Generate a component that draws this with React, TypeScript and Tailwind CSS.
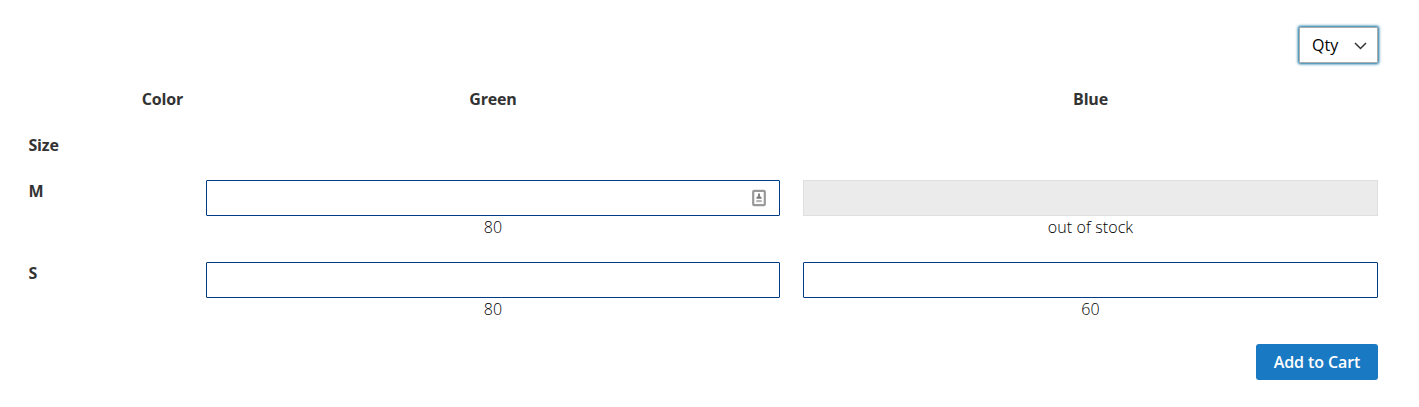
import React from "react";

const cells = [
  { size: "M", stock: [{ label: "80", icon: true, off: false }, { label: "out of stock", icon: false, off: true }] },
  { size: "S", stock: [{ label: "80", icon: false, off: false }, { label: "60", icon: false, off: false }] },
];

function ContactIcon() {
  return (
    <svg className="mr-3 shrink-0" width="16" height="18" viewBox="0 0 16 18" fill="none">
      <rect x="2.2" y="1.8" width="11.6" height="14.4" rx="1" stroke="#999" strokeWidth="2.2" />
      <rect x="7.1" y="4.5" width="1.8" height="2.8" fill="#777" />
      <path d="M5.3 9.8Q5.6 7 8 7T10.7 9.8Z" fill="#777" />
      <path d="M5.3 11H10.7V13.2H5.3Z" fill="#b5b5b5" />
    </svg>
  );
}

export default function App() {
  return (
    <main className="h-[407px] w-[1419px] bg-white pl-[28.5px] pr-[41px] pt-[27px] font-['Open_Sans',sans-serif] text-[16px] leading-[22px] text-[#333]">
      <div className="flex justify-end">
        <button className="flex h-9 w-[79px] items-center justify-between rounded-[1px] border border-[#adadad] bg-white pl-[12px] pr-[10px] text-black shadow-[0_0_3px_1px_#00699d]">
          Qty
          <svg className="mt-0.5" width="13" height="8" viewBox="0 0 13 8" fill="none"><path d="M1 1L6.5 6.5L12 1" stroke="#333" strokeWidth="1.5" /></svg>
        </button>
      </div>
      <div className="mt-[25px] grid h-[46px] grid-cols-[154.5px_574px_575px] gap-x-[23px] font-bold tracking-[-0.2px]">
        <div className="text-right">Color</div>
        <div className="text-center">Green</div>
        <div className="text-center">Blue</div>
      </div>
      <div className="h-[46px] font-bold tracking-[-0.2px]">Size</div>
      {cells.map((row) => (
        <div key={row.size} className="grid h-[82px] grid-cols-[154.5px_574px_575px] gap-x-[23px]">
          <div className="font-bold">{row.size}</div>
          {row.stock.map((s, i) => (
            <div key={i} className="text-center">
              <div className={s.off ? "h-9 border border-[#dfdfdf] bg-[#ebebeb]" : "flex h-9 items-center justify-end rounded-[1px] border border-[#003b85] bg-white"}>
                {s.icon && <ContactIcon />}
              </div>
              <div className="font-light tracking-[0.1px] text-black">{s.label}</div>
            </div>
          ))}
        </div>
      ))}
      <div className="flex justify-end">
        <button className="h-9 w-[122px] rounded-[3px] bg-[#1979c3] font-semibold tracking-[-0.1px] text-white">Add to Cart</button>
      </div>
    </main>
  );
}
